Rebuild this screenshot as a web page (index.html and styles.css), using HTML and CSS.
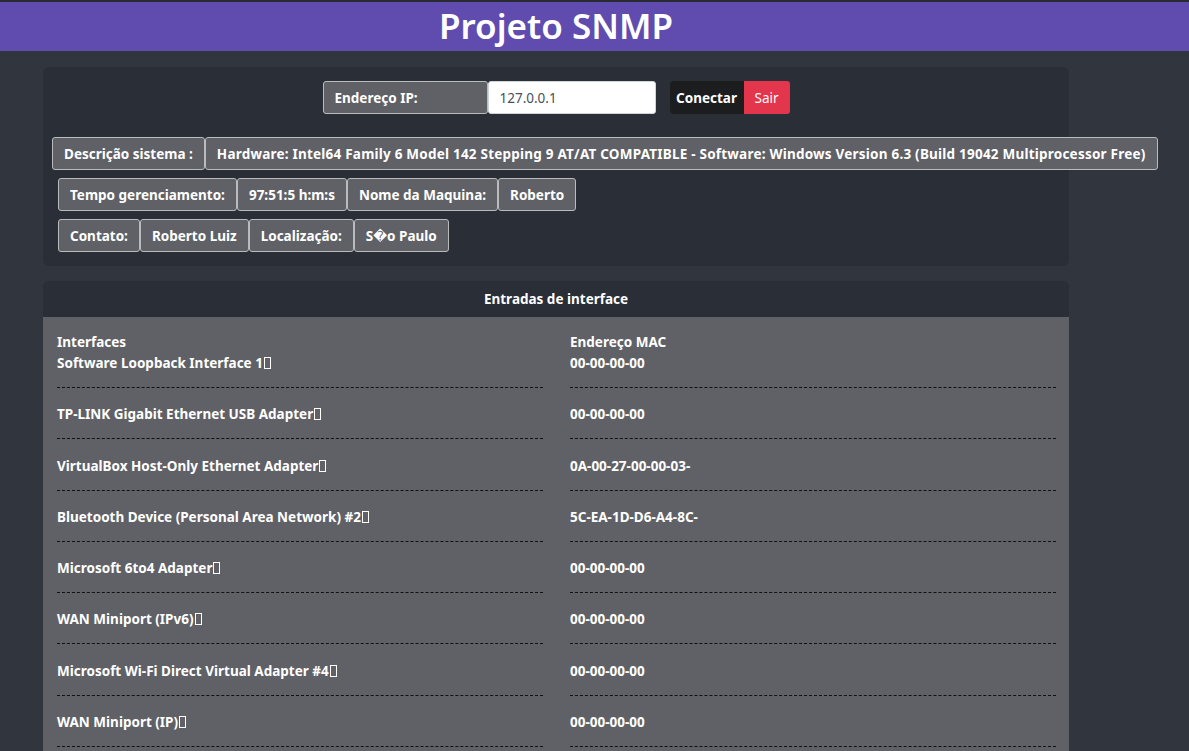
FILE: index.html
```html
<!DOCTYPE html>
<html lang="pt">
<head>
<meta charset="utf-8">
<title>Projeto SNMP</title>
<link rel="stylesheet" href="styles.css">
</head>
<body>
<header class="topbar">
  <div class="wrap">
    <h1 class="title">Projeto SNMP</h1>
  </div>
</header>
<main class="wrap">
  <section class="card info">
    <div class="connect">
      <span class="box label ip-label">Endereço IP:</span>
      <input class="ip-input" type="text" value="127.0.0.1">
      <button class="btn btn-dark">Conectar</button>
      <button class="btn btn-red">Sair</button>
    </div>
    <div class="group row-desc">
      <span class="box">Descrição sistema :</span>
      <span class="box desc">Hardware: Intel64 Family 6 Model 142 Stepping 9 AT/AT COMPATIBLE - Software: Windows Version 6.3 (Build 19042 Multiprocessor Free)</span>
    </div>
    <div class="group row-small">
      <span class="box">Tempo gerenciamento:</span>
      <span class="box">97:51:5 h:m:s</span>
      <span class="box">Nome da Maquina:</span>
      <span class="box">Roberto</span>
    </div>
    <div class="group row-small">
      <span class="box">Contato:</span>
      <span class="box">Roberto Luiz</span>
      <span class="box">Localização:</span>
      <span class="box">S<span class="repl">�</span>o Paulo</span>
    </div>
  </section>

  <section class="card table">
    <div class="table-head">Entradas de interface</div>
    <div class="table-body">
      <div class="col">
        <div class="col-title">Interfaces</div>
        <div class="item">Software Loopback Interface 1<span class="tofu"></span></div><hr class="sep">
        <div class="item">TP-LINK Gigabit Ethernet USB Adapter<span class="tofu"></span></div><hr class="sep">
        <div class="item">VirtualBox Host-Only Ethernet Adapter<span class="tofu"></span></div><hr class="sep">
        <div class="item">Bluetooth Device (Personal Area Network) #2<span class="tofu"></span></div><hr class="sep">
        <div class="item">Microsoft 6to4 Adapter<span class="tofu"></span></div><hr class="sep">
        <div class="item">WAN Miniport (IPv6)<span class="tofu"></span></div><hr class="sep">
        <div class="item">Microsoft Wi-Fi Direct Virtual Adapter #4<span class="tofu"></span></div><hr class="sep">
        <div class="item">WAN Miniport (IP)<span class="tofu"></span></div><hr class="sep">
      </div>
      <div class="col">
        <div class="col-title">Endereço MAC</div>
        <div class="item">00-00-00-00</div><hr class="sep">
        <div class="item">00-00-00-00</div><hr class="sep">
        <div class="item">0A-00-27-00-00-03-</div><hr class="sep">
        <div class="item">5C-EA-1D-D6-A4-8C-</div><hr class="sep">
        <div class="item">00-00-00-00</div><hr class="sep">
        <div class="item">00-00-00-00</div><hr class="sep">
        <div class="item">00-00-00-00</div><hr class="sep">
        <div class="item">00-00-00-00</div><hr class="sep">
      </div>
    </div>
  </section>
</main>
</body>
</html>
```

FILE: styles.css
```css
* { box-sizing: border-box; }
html, body {
  margin: 0;
  padding: 0;
  background: #31353e;
  color: #fff;
  font-family: "Noto Sans", "DejaVu Sans", sans-serif;
  height: 751px;
  overflow: hidden;
}
.wrap {
  width: 1026px;
  margin-left: 43px;
}
.topbar {
  border-top: 2px solid #2a2a33;
  background: #604bae;
  height: 51px;
}
.title {
  margin: 0;
  text-align: center;
  font-size: 35px;
  font-weight: 600;
  line-height: 47px;
  color: #fff;
}
.card {
  background: #2a2e37;
  border-radius: 6px;
}
.info {
  margin-top: 16px;
  padding: 14px 0 14px;
}
.connect {
  display: flex;
  justify-content: center;
  height: 33px;
}
.box {
  display: inline-flex;
  align-items: center;
  height: 33px;
  padding: 0 11px;
  background: #606166;
  border: 1px solid #b9bbbe;
  border-radius: 3px;
  font-size: 13.5px;
  font-weight: 700;
  color: #fff;
  white-space: nowrap;
}
.desc {
  letter-spacing: 0.22px;
}
.ip-label {
  width: 165px;
  padding-left: 11px;
}
.ip-input {
  width: 168px;
  height: 33px;
  border: 1px solid #ced4da;
  border-radius: 3px;
  background: #fff;
  color: #495057;
  font-family: "Noto Sans", sans-serif;
  font-size: 13.5px;
  padding: 0 11px;
  margin-right: 14px;
}
.btn {
  height: 33px;
  border: none;
  font-family: "Noto Sans", sans-serif;
  font-size: 13.5px;
  color: #fff;
  padding: 0 6px;
}
.btn-dark {
  background: #1c1d1f;
  font-weight: 700;
  border-radius: 4px 0 0 4px;
  width: 74px;
}
.btn-red {
  background: #e3354b;
  border-radius: 0 3px 3px 0;
  width: 46px;
}
.group {
  display: flex;
}
.row-desc {
  margin: 23px 0 0 9px;
}
.row-small {
  margin: 8px 0 0 15px;
}
.table {
  margin-top: 15px;
  overflow: hidden;
  border-radius: 6px 6px 0 0;
}
.table-head {
  height: 36px;
  line-height: 36px;
  text-align: center;
  font-size: 13.5px;
  font-weight: 700;
}
.table-body {
  background: #606166;
  display: grid;
  grid-template-columns: 1fr 1fr;
  column-gap: 27px;
  padding: 15px 13px 0 14px;
  height: 500px;
}
.col-title, .item {
  font-size: 13.5px;
  font-weight: 700;
  line-height: 21px;
  white-space: nowrap;
}
.sep {
  border: none;
  border-top: 1px dashed #111;
  margin: 13px 0 16.3px;
  height: 0;
}
.tofu {
  display: inline-block;
  width: 7px;
  height: 12px;
  border: 1px solid #fff;
  margin-left: 1px;
  vertical-align: -1px;
}
.repl {
  font-family: "DejaVu Sans", sans-serif;
  font-weight: 400;
}
```
